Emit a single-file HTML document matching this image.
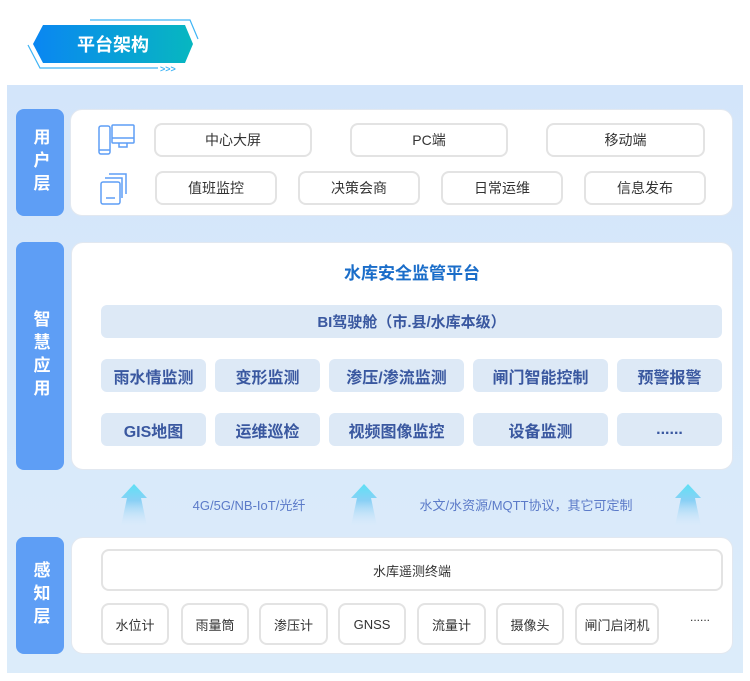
<!DOCTYPE html>
<html><head><meta charset="utf-8"><style>
*{margin:0;padding:0;box-sizing:border-box}
body{width:750px;height:681px;background:#fff;position:relative;font-family:"Liberation Sans","Noto Sans CJK SC",sans-serif;overflow:hidden}
.a{position:absolute}
.bg{left:7px;top:85px;width:736px;height:588px;background:linear-gradient(#d3e5fa,#dcecfa)}
.lab{background:#5e9ef5;border-radius:8px;color:#fff;font-weight:bold;font-size:17px;display:flex;align-items:center;justify-content:center;writing-mode:vertical-rl;letter-spacing:6px;left:16px;width:48px}
.card{background:#fff;border-radius:12px;border:1px solid #e2e8f0;left:70px;width:663px}
.b{border:2px solid #e3e3e3;border-radius:8px;background:#fff;display:flex;align-items:center;justify-content:center;font-size:14px;color:#333}
.s{background:#dde9f6;border-radius:6px;display:flex;align-items:center;justify-content:center;font-size:16px;font-weight:bold;color:#3a58a0}
.t{font-size:13px;color:#5b7ac8}
</style></head><body>
<svg class="a" style="left:20px;top:15px" width="180" height="62">
<defs><linearGradient id="g" x1="0" x2="1"><stop offset="0" stop-color="#0a86f2"/><stop offset="1" stop-color="#07b7c0"/></linearGradient>
<linearGradient id="ar" x1="0" y1="0" x2="0" y2="1"><stop offset="0" stop-color="#5ee0f5"/><stop offset="0.4" stop-color="#8ad0f5"/><stop offset="1" stop-color="#cfe6fa" stop-opacity="0"/></linearGradient></defs>
<path d="M23 10 L165 10 L173 29 L165 48 L23 48 L13 29 Z" fill="url(#g)"/>
<path d="M70 5 L170 5 L178 24" fill="none" stroke="#3fb4f5" stroke-width="1.2"/>
<path d="M8 30 L20 53 L138 53" fill="none" stroke="#3fb4f5" stroke-width="1.2"/>
<text x="140" y="57" font-size="9" fill="#3fb4f5" font-weight="bold">&gt;&gt;&gt;</text>
<text x="93" y="36" text-anchor="middle" font-size="18" font-weight="bold" fill="#fff" font-family="Liberation Sans,Noto Sans CJK SC,sans-serif">平台架构</text>
</svg>
<div class="a bg"></div>
<div class="a lab" style="top:109px;height:107px">用户层</div>
<div class="a card" style="top:109px;height:107px"></div>
<svg class="a" style="left:97px;top:123px" width="40" height="86" fill="none" stroke="#5e9ef5" stroke-width="1.5">
<rect x="2" y="3" width="11" height="28" rx="2"/><line x1="2" y1="27" x2="13" y2="27"/>
<rect x="15" y="2" width="22" height="18" rx="1"/><line x1="15" y1="15" x2="37" y2="15"/><path d="M22 20 v4 h8 v-4"/>
<rect x="4" y="59" width="19" height="22" rx="2"/><path d="M8 55 h17 v20"/><path d="M12 51 h17 v20"/><line x1="9" y1="75" x2="18" y2="75"/>
</svg>
<div class="a b" style="left:154px;top:123px;width:158px;height:34px">中心大屏</div>
<div class="a b" style="left:350px;top:123px;width:158px;height:34px">PC端</div>
<div class="a b" style="left:546px;top:123px;width:159px;height:34px">移动端</div>
<div class="a b" style="left:155px;top:171px;width:122px;height:34px">值班监控</div>
<div class="a b" style="left:298px;top:171px;width:122px;height:34px">决策会商</div>
<div class="a b" style="left:441px;top:171px;width:122px;height:34px">日常运维</div>
<div class="a b" style="left:584px;top:171px;width:122px;height:34px">信息发布</div>

<div class="a lab" style="top:242px;height:228px">智慧应用</div>
<div class="a card" style="left:71px;width:662px;top:242px;height:228px"></div>
<div class="a" style="left:71px;width:682px;top:259px;text-align:center;font-size:17px;font-weight:bold;color:#1a6dc9">水库安全监管平台</div>
<div class="a s" style="left:101px;top:305px;width:621px;height:33px;font-size:15px">BI驾驶舱（市.县/水库本级）</div>
<div class="a s" style="left:101px;top:359px;width:105px;height:33px">雨水情监测</div>
<div class="a s" style="left:215px;top:359px;width:105px;height:33px">变形监测</div>
<div class="a s" style="left:329px;top:359px;width:135px;height:33px">渗压/渗流监测</div>
<div class="a s" style="left:473px;top:359px;width:135px;height:33px">闸门智能控制</div>
<div class="a s" style="left:617px;top:359px;width:105px;height:33px">预警报警</div>
<div class="a s" style="left:101px;top:413px;width:105px;height:33px">GIS地图</div>
<div class="a s" style="left:215px;top:413px;width:105px;height:33px">运维巡检</div>
<div class="a s" style="left:329px;top:413px;width:135px;height:33px">视频图像监控</div>
<div class="a s" style="left:473px;top:413px;width:135px;height:33px">设备监测</div>
<div class="a s" style="left:617px;top:413px;width:105px;height:33px">......</div>

<svg class="a" style="left:0;top:482px" width="750" height="46">
<g fill="url(#ar)"><path d="M134 2 L147 16 L141 16 L147 44 L121 44 L127 16 L121 16 Z"/>
<path d="M364 2 L377 16 L371 16 L377 44 L351 44 L357 16 L351 16 Z"/>
<path d="M688 2 L701 16 L695 16 L701 44 L675 44 L681 16 L675 16 Z"/></g></svg>
<div class="a t" style="left:149px;width:200px;top:495px;text-align:center">4G/5G/NB-IoT/光纤</div>
<div class="a t" style="left:396px;width:260px;top:495px;text-align:center">水文/水资源/MQTT协议，其它可定制</div>

<div class="a lab" style="top:537px;height:117px">感知层</div>
<div class="a card" style="left:71px;width:662px;top:537px;height:117px"></div>
<div class="a b" style="left:101px;top:549px;width:622px;height:42px;font-size:13px">水库遥测终端</div>
<div class="a b" style="left:101px;top:603px;width:68px;height:42px;font-size:13px">水位计</div>
<div class="a b" style="left:181px;top:603px;width:68px;height:42px;font-size:13px">雨量筒</div>
<div class="a b" style="left:259px;top:603px;width:69px;height:42px;font-size:13px">渗压计</div>
<div class="a b" style="left:338px;top:603px;width:68px;height:42px;font-size:13px">GNSS</div>
<div class="a b" style="left:417px;top:603px;width:69px;height:42px;font-size:13px">流量计</div>
<div class="a b" style="left:496px;top:603px;width:68px;height:42px;font-size:13px">摄像头</div>
<div class="a b" style="left:575px;top:603px;width:84px;height:42px;font-size:13px">闸门启闭机</div>
<div class="a" style="left:690px;top:610px;font-size:12px;color:#333">......</div>
</body></html>
